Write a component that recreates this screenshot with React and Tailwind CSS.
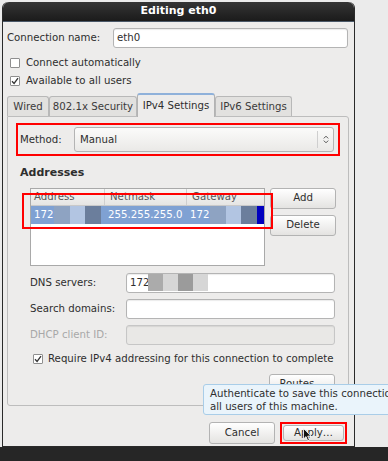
import React from "react";

// Small GTK-ish building blocks
const Check = ({ checked }) => (
  <span className="w-[10px] h-[10px] border border-[#8f8f8f] bg-white rounded-[1px] flex items-center justify-center shrink-0">
    {checked && (
      <svg width="8" height="8" viewBox="0 0 8 8">
        <path d="M1 4.2 L3.1 6.4 L7 1.2" fill="none" stroke="#333" strokeWidth="1.3" />
      </svg>
    )}
  </span>
);

const Button = ({ children, className = "" }) => (
  <div
    className={`h-[21px] flex items-center justify-center rounded-[3px] border border-[#b3b3b3] bg-gradient-to-b from-white to-[#e4e3e1] text-[#2e2e2e] ${className}`}
  >
    {children}
  </div>
);

const Field = ({ className = "", children }) => (
  <div
    className={`h-[20px] rounded-[3px] border border-[#b4b4b4] bg-white flex items-center px-[3px] shadow-[inset_0_1px_1px_rgba(0,0,0,0.08)] ${className}`}
  >
    {children}
  </div>
);

const Tab = ({ label, active, className = "" }) => (
  <div
    className={
      active
        ? `h-[24px] flex items-center justify-center whitespace-nowrap bg-[#edeceb] border border-[#b3b3b3] border-b-0 border-t-2 border-t-[#8fb1da] rounded-t-[3px] -mb-px relative z-10 ${className}`
        : `h-[20px] flex items-center justify-center whitespace-nowrap bg-[#e2e1df] border border-[#b8b8b8] border-b-0 rounded-t-[3px] text-[#3a3a3a] ${className}`
    }
  >
    {label}
  </div>
);

export default function App() {
  return (
    <div
      className="w-[388px] h-[461px] bg-[#ebebeb] flex flex-col overflow-hidden text-[10.2px] text-[#2e2e2e]"
      style={{ fontFamily: '"DejaVu Sans", "Liberation Sans", sans-serif' }}
    >
      <div className="flex-1 flex items-start pt-[2px] pl-[2px]">
        {/* Dialog window */}
        <div className="w-[353px] h-[445px] flex flex-col border-x border-b border-[#2a2a2a] rounded-t-[6px] relative">
          {/* Title bar */}
          <div className="h-[20px] shrink-0 rounded-t-[6px] bg-gradient-to-b from-[#353535] to-[#1b1b1b] flex items-center justify-center text-white font-bold text-[11px] border-b border-[#4a5868]">
            Editing eth0
          </div>

          <div className="flex-1 bg-[#edeceb] px-[4px] pt-[6px] flex flex-col">
            {/* Connection name */}
            <div className="flex items-center">
              <span className="w-[106px]">Connection name:</span>
              <Field className="w-[235px]">eth0</Field>
            </div>

            <div className="flex flex-col gap-[5px] mt-[8px] pl-[3px]">
              <label className="flex items-center gap-[6px] h-[13px]">
                <Check />
                Connect automatically
              </label>
              <label className="flex items-center gap-[6px] h-[13px]">
                <Check checked />
                Available to all users
              </label>
            </div>

            {/* Tabs */}
            <div className="flex items-end mt-[6px] h-[23px]">
              <Tab label="Wired" className="w-[42px]" />
              <Tab label="802.1x Security" className="w-[88px]" />
              <Tab label="IPv4 Settings" active className="w-[78px]" />
              <Tab label="IPv6 Settings" className="w-[77px]" />
            </div>

            {/* Tab panel */}
            <div className="w-[342px] h-[290px] border border-[#bdbdbd] rounded-b-[3px] rounded-tr-[3px] relative px-[8px] pt-[6px]">
              {/* Method */}
              <div className="w-[324px] h-[33px] border-2 border-[#ff0000] flex items-center pl-[2px] pr-[4px]">
                <span className="w-[54px]">Method:</span>
                <div className="flex-1 h-[25px] rounded-[3px] border border-[#b4b4b4] bg-gradient-to-b from-[#fbfbfa] to-[#eae9e7] flex items-center pl-[5px]">
                  <span className="flex-1">Manual</span>
                  <span className="w-[16px] h-[17px] border-l border-[#cfcfcf] flex items-center justify-center">
                    <svg width="6" height="9" viewBox="0 0 6 9">
                      <path d="M0.8 3.4 L3 1.2 L5.2 3.4 M0.8 5.6 L3 7.8 L5.2 5.6" fill="none" stroke="#555" strokeWidth="1" />
                    </svg>
                  </span>
                </div>
              </div>

              <div className="font-bold text-[11px] mt-[9px] pl-[4px]">Addresses</div>

              {/* Address list + buttons */}
              <div className="flex mt-[6px] pl-[14px] gap-[5px]">
                <div className="w-[235px] h-[78px] border border-[#a9a9a9] bg-white flex flex-col">
                  <div className="h-[17px] flex bg-gradient-to-b from-[#f7f7f6] to-[#e6e5e3] border-b border-[#c9c9c9] text-[#555]">
                    <span className="w-[74px] pl-[3px] border-r border-[#cfcfcf] flex items-center">Address</span>
                    <span className="w-[82px] pl-[5px] border-r border-[#cfcfcf] flex items-center">Netmask</span>
                    <span className="flex-1 pl-[5px] flex items-center">Gateway</span>
                  </div>
                  <div className="h-[18px] flex items-center bg-[#7fa1d3] text-white whitespace-nowrap">
                    <span className="pl-[3px] w-[23px] shrink-0">172</span>
                    <span className="w-[16px] h-full bg-[#8ea3c2] shrink-0" />
                    <span className="w-[15px] h-full bg-[#b2c5e2] shrink-0" />
                    <span className="w-[16px] h-full bg-[#6b7e9c] shrink-0" />
                    <span className="pl-[7px] w-[89px] shrink-0">255.255.255.0</span>
                    <span className="w-[20px] shrink-0">172</span>
                    <span className="w-[16px] h-full bg-[#8ea3c2] shrink-0" />
                    <span className="w-[15px] h-full bg-[#b2c5e2] shrink-0" />
                    <span className="w-[16px] h-full bg-[#6b7e9c] shrink-0" />
                    <span className="flex-1 h-full bg-[#0000bf]" />
                  </div>
                </div>
                <div className="flex flex-col gap-[6px]">
                  <Button className="w-[66px]">Add</Button>
                  <Button className="w-[66px]">Delete</Button>
                </div>
              </div>

              {/* Red highlight on the address row */}
              <div className="absolute left-[14px] top-[76px] w-[251px] h-[36px] border-2 border-[#ff0000]" />

              {/* DNS etc */}
              <div className="flex flex-col gap-[6px] mt-[7px] pl-[14px]">
                <div className="flex items-center">
                  <span className="w-[96px]">DNS servers:</span>
                  <Field className="w-[209px]">
                    <span className="w-[18px]">172</span>
                    <span className="w-[15px] h-[17px] bg-[#ababab]" />
                    <span className="w-[15px] h-[17px] bg-[#d6d6d6]" />
                    <span className="w-[15px] h-[17px] bg-[#9b9b9b]" />
                    <span className="w-[15px] h-[17px] bg-[#d6d6d6]" />
                  </Field>
                </div>
                <div className="flex items-center">
                  <span className="w-[96px]">Search domains:</span>
                  <Field className="w-[209px]" />
                </div>
                <div className="flex items-center">
                  <span className="w-[96px] text-[#a8a8a8]">DHCP client ID:</span>
                  <Field className="w-[209px] !bg-[#e9e8e6] !border-[#c6c6c6]" />
                </div>
              </div>

              <label className="flex items-center gap-[5px] mt-[7px] pl-[17px] h-[14px] whitespace-nowrap">
                <Check checked />
                Require IPv4 addressing for this connection to complete
              </label>

              <div className="flex justify-end mt-[8px] pr-[5px]">
                <Button className="w-[66px]">Routes…</Button>
              </div>
            </div>

            {/* Dialog buttons */}
            <div className="flex justify-end gap-[5px] mt-[16px] pr-[3px]">
              <Button className="w-[66px] !h-[22px]">Cancel</Button>
              <div className="w-[67px] h-[22px] border-2 border-[#ff0000] p-px flex">
                <Button className="flex-1 !h-full">Apply…</Button>
              </div>
            </div>
          </div>

          {/* Tooltip */}
          <div className="absolute left-[200px] top-[382px] w-[230px] h-[31px] bg-[#eaf4fb] border border-[#a9cde8] rounded-[3px] pl-[6px] pt-[2px] leading-[13px] text-[#2e2e2e] whitespace-nowrap z-20">
            <div>Authenticate to save this connection for</div>
            <div>all users of this machine.</div>
          </div>

          {/* Mouse pointer */}
          <svg className="absolute left-[300px] top-[426px] z-30" width="9" height="14" viewBox="0 0 9 14">
            <path d="M0.5 0.5 L0.5 11 L3 8.6 L4.8 12.8 L6.4 12.1 L4.7 8.1 L8 8.1 Z" fill="#111" stroke="#fff" strokeWidth="0.8" />
          </svg>
        </div>
      </div>
      <div className="h-[14px] bg-[#262626] shrink-0" />
    </div>
  );
}
